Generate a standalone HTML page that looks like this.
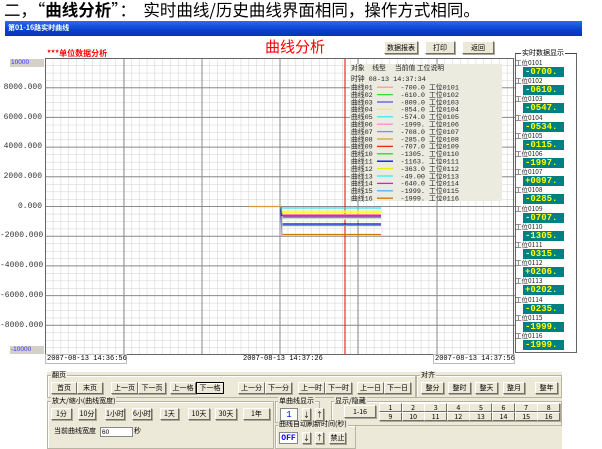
<!DOCTYPE html>
<html><head><meta charset="utf-8"><style>
*{margin:0;padding:0;box-sizing:border-box}
body{width:602px;height:449px;overflow:hidden;background:#fff;position:relative;font-family:"Liberation Sans","Noto Sans CJK SC",sans-serif;color:#000}
.a{position:absolute;white-space:nowrap}
.btn{position:absolute;background:#ece9d8;border:1px solid;border-color:#fff #716f64 #716f64 #fff;box-shadow:1px 1px 0 #aca899;font-size:7px;display:flex;align-items:center;justify-content:center;font-family:"Noto Sans CJK SC",sans-serif}
.grp{position:absolute;border:1px solid #b8b4a4;box-shadow:inset 1px 1px 0 #fff}
.lg{position:absolute;font-size:7px;background:#ece9d8;padding:0 1px;font-family:"Noto Sans CJK SC",sans-serif;line-height:8px}
.rl{position:absolute;left:515px;font-size:6.5px;font-family:"Noto Sans CJK SC",sans-serif;line-height:7px;color:#222}
.rv{position:absolute;left:523px;width:41px;height:10px;background:#008080;color:#ffff00;font:bold 9px "Liberation Mono",monospace;line-height:10px;padding-left:2px}
</style></head><body>
<div class="a" style="left:4px;top:0;font-size:16.5px;line-height:19px;font-family:'Noto Sans CJK SC',sans-serif">二，“<b>曲线分析</b>”：&nbsp; 实时曲线/历史曲线界面相同，操作方式相同。</div>
<div class="a" style="left:5px;top:21px;width:577px;height:15px;background:linear-gradient(#2a6de8,#0a3fd0 60%,#0836b0);color:#fff;font-size:7px;font-weight:bold;line-height:15px;padding-left:3px;font-family:'Noto Sans CJK SC',sans-serif">第01-16路实时曲线</div>
<div class="a" style="left:265px;top:36px;color:#f00;font-size:15px;font-family:'Noto Sans CJK SC',sans-serif">曲线分析</div>
<div class="btn" style="left:384px;top:41px;width:34px;height:13px">数据报表</div>
<div class="btn" style="left:425px;top:41px;width:30px;height:13px">打印</div>
<div class="btn" style="left:462px;top:41px;width:32px;height:13px">返回</div>
<div class="a" style="left:47px;top:48px;color:#f00;font-size:8px;font-weight:bold;font-family:'Noto Sans CJK SC',sans-serif">***单位数据分析</div>
<div class="a" style="left:10px;top:59px;width:34px;height:8px;background:#d4d0c8;color:#33f;font-size:6.5px;line-height:8px;padding-left:1px">10000</div>
<div class="a" style="left:10px;top:346px;width:34px;height:8px;background:#d4d0c8;color:#33f;font-size:6.5px;line-height:8px;padding-left:1px">-10000</div>
<div class="a" style="left:0;top:83px;width:42px;text-align:right;font:8px 'Liberation Mono',monospace;line-height:10px;color:#333">
<div style="height:29.7px">8000.000</div><div style="height:29.7px">6000.000</div><div style="height:29.7px">4000.000</div><div style="height:29.7px">2000.000</div><div style="height:29.7px">0.000</div><div style="height:29.7px">-2000.000</div><div style="height:29.7px">-4000.000</div><div style="height:29.7px">-6000.000</div><div style="height:29.7px">-8000.000</div></div>
<svg class="a" style="left:45px;top:58px" width="470" height="297" viewBox="0 0 470 297">
<defs><pattern id="g" width="7.83" height="7.42" patternUnits="userSpaceOnUse"><path d="M0 0V7.42M0 0H7.83" stroke="#cfcfcf" stroke-width="1" fill="none"/></pattern></defs>
<rect width="470" height="297" fill="#fff"/><rect width="470" height="297" fill="url(#g)"/>
<g stroke="#8a8a8a" stroke-width="1"><path d="M79 0V297M157 0V297M235 0V297M313 0V297M392 0V297"/><path d="M0 29.7H470M0 59.4H470M0 89.1H470M0 118.8H470M0 148.5H470M0 178.2H470M0 207.9H470M0 237.6H470M0 267.3H470"/></g>
<path d="M300 0V297" stroke="#e00" stroke-width="1"/>
<rect x="0.5" y="0.5" width="468" height="296" fill="none" stroke="#666"/>
<g stroke-width="1.3" fill="none">
<path d="M204 148.5H236" stroke="#d99a3a"/>
<path d="M236 149L237 178" stroke="#0000ff"/><path d="M236 149L238 160" stroke="#3c3"/>
<path d="M237 150H336" stroke="#3dd"/><path d="M237 153H336" stroke="#ee6"/><path d="M237 154.5H336" stroke="#ff3"/>
<path d="M237 156.5H336" stroke="#f9a"/><path d="M237 157.5H336" stroke="#f0f"/><path d="M237 158.3H336" stroke="#f33"/>
<path d="M237 159H336" stroke="#66f"/><path d="M237 160H336" stroke="#7af"/><path d="M237 161H336" stroke="#ffa"/>
<path d="M237 166H336" stroke="#00e"/><path d="M237 167.5H336" stroke="#3c3"/><path d="M237 176.5H336" stroke="#c70"/>
<path d="M237 158V178" stroke="#ccc"/>
</g>
<rect x="305" y="6" width="152" height="137" fill="#ecebe0"/>
<g font-family="Noto Sans CJK SC,sans-serif" font-size="6.8" fill="#222">
<text x="306" y="12">对象&#160;&#160;&#160;&#160; 线型&#160;&#160;&#160;&#160;&#160; 当前值 工位说明</text>
<text x="306" y="23" font-family="Liberation Mono,Noto Sans CJK SC,monospace">时钟 08-13 14:37:34</text>
</g>
<g id="lg" font-family="Liberation Mono,Noto Sans CJK SC,monospace" font-size="6.8" fill="#222"></g>
</svg>
<div class="a" style="left:45px;top:354px;width:82px;height:10px;background:#fff;border:1px solid #bbb;font:7px 'Liberation Mono',monospace;line-height:9px;padding-left:1px">2007-08-13 14:36:56</div>
<div class="a" style="left:243px;top:355px;font:7px 'Liberation Mono',monospace">2007-08-13 14:37:26</div>
<div class="a" style="left:433px;top:354px;width:82px;height:10px;background:#fff;border:1px solid #bbb;font:7px 'Liberation Mono',monospace;line-height:9px;padding-left:1px">2007-08-13 14:37:56</div>
<div class="a" style="left:515px;top:53px;width:62px;height:300px;border:1px solid #666;border-top-color:#444"></div>
<div class="lg" style="left:521px;top:49px;background:#fff">实时数据显示</div>
<div id="rp"></div>
<div class="a" style="left:47px;top:372px;width:515px;height:77px;background:#ece9d8"></div>
<div class="grp" style="left:47px;top:375px;width:369px;height:23px"></div><div class="lg" style="left:51px;top:371px">翻页</div>
<div class="grp" style="left:416px;top:375px;width:146px;height:23px"></div><div class="lg" style="left:420px;top:371px">对齐</div>
<div class="grp" style="left:47px;top:401px;width:227px;height:48px"></div><div class="lg" style="left:51px;top:397px">放大/缩小(曲线宽度)</div>
<div class="grp" style="left:275px;top:401px;width:45px;height:22px"></div><div class="lg" style="left:278px;top:397px">单曲线显示</div>
<div class="grp" style="left:331px;top:401px;width:231px;height:25px"></div><div class="lg" style="left:334px;top:397px">显示/隐藏</div>
<div class="grp" style="left:275px;top:425px;width:81px;height:24px"></div><div class="lg" style="left:278px;top:420px">曲线自动刷新时间(秒)</div>
<div id="bt"></div>
<div class="a" style="left:54px;top:426px;font-size:7px;font-family:'Noto Sans CJK SC',sans-serif">当前曲线宽度</div>
<div class="a" style="left:100px;top:427px;width:33px;height:10px;background:#fff;border:1px solid #888;font-size:6.5px;line-height:9px;padding-left:1px">60</div>
<div class="a" style="left:134px;top:426px;font-size:7px;font-family:'Noto Sans CJK SC',sans-serif">秒</div>
<div class="a" style="left:280px;top:408px;width:18px;height:13px;background:#fff;border:1px solid #888;color:#00f;font:9px 'Liberation Mono',monospace;line-height:12px;text-align:center">1</div>
<div class="a" style="left:279px;top:432px;width:19px;height:12px;background:#fff;border:1px solid #888;color:#00f;font:bold 8px 'Liberation Mono',monospace;line-height:11px;text-align:center">OFF</div>
<script>
var vals=[["-700.0","#f99"],["-610.0","#3d3"],["-809.0","#55e"],["-854.0","#ee6"],["-574.0","#3ee"],["-1999.","#f8d"],["-708.0","#69e"],["-285.0","#d9a040"],["-707.0","#e22"],["-1305.","#2d2"],["-1163.","#00f"],["-363.0","#ee0"],["-49.00","#3ee"],["-640.0","#f0f"],["-1999.","#5af"],["-1999.","#c70"]];
var g=document.getElementById('lg'),s='';
vals.forEach(function(v,i){var y=31.5+i*7.4,n=(i<9?'0':'')+(i+1);
s+='<text x="306" y="'+y+'">曲线'+n+'</text><line x1="332" x2="348" y1="'+(y-2.3)+'" y2="'+(y-2.3)+'" stroke="'+v[1]+'" stroke-width="1.3"/><text x="380" y="'+y+'" text-anchor="end">'+v[0]+'</text><text x="384" y="'+y+'">工位01'+n+'</text>';});
g.innerHTML=s;
var rv=["-0700.","-0610.","-0547.","-0534.","-0115.","-1997.","+0097.","-0285.","-0707.","-1305.","-0315.","+0206.","+0202.","-0235.","-1999.","-1999."],h='';
rv.forEach(function(v,i){var y=59+i*18.2,n=(i<9?'0':'')+(i+1);h+='<div class="rl" style="top:'+y+'px">工位01'+n+'</div><div class="rv" style="top:'+(y+8)+'px">'+v+'</div>';});
document.getElementById('rp').innerHTML=h;
var b=[["首页",51,26],["末页",77,26],["上一页",111,27],["下一页",138,28],["上一格",170,26],["下一格",196,28,1],["上一分",238,27],["下一分",265,27],["上一时",298,27],["下一时",325,27],["上一日",357,27],["下一日",384,27],["整分",421,23],["整时",448,23],["整天",475,23],["整月",503,22],["整年",535,23]],o='';
b.forEach(function(x){o+='<div class="btn" style="left:'+x[1]+'px;top:382px;width:'+x[2]+'px;height:12px'+(x[3]?';border:1px solid #000;box-shadow:inset 1px 1px 0 #fff':'')+'">'+x[0]+'</div>';});
[["1分",51,21],["10分",78,18],["1小时",105,20],["6小时",132,20],["1天",160,19],["10天",188,22],["30天",215,22],["1年",243,27]].forEach(function(x){o+='<div class="btn" style="left:'+x[1]+'px;top:408px;width:'+x[2]+'px;height:12px">'+x[0]+'</div>';});
o+='<div class="btn" style="left:302px;top:408px;width:9px;height:13px">↓</div><div class="btn" style="left:315px;top:408px;width:9px;height:13px">↑</div>';
o+='<div class="btn" style="left:302px;top:432px;width:9px;height:12px">↓</div><div class="btn" style="left:315px;top:432px;width:9px;height:12px">↑</div><div class="btn" style="left:329px;top:432px;width:17px;height:12px">禁止</div>';
o+='<div class="btn" style="left:344px;top:405px;width:32px;height:13px">1-16</div>';
for(var i=0;i<8;i++){var x=379+i*22.6;o+='<div class="btn" style="left:'+x+'px;top:403px;width:23px;height:9px">'+(i+1)+'</div><div class="btn" style="left:'+x+'px;top:412px;width:23px;height:9px">'+(i+9)+'</div>';}
document.getElementById('bt').innerHTML=o;
</script>
</body></html>
